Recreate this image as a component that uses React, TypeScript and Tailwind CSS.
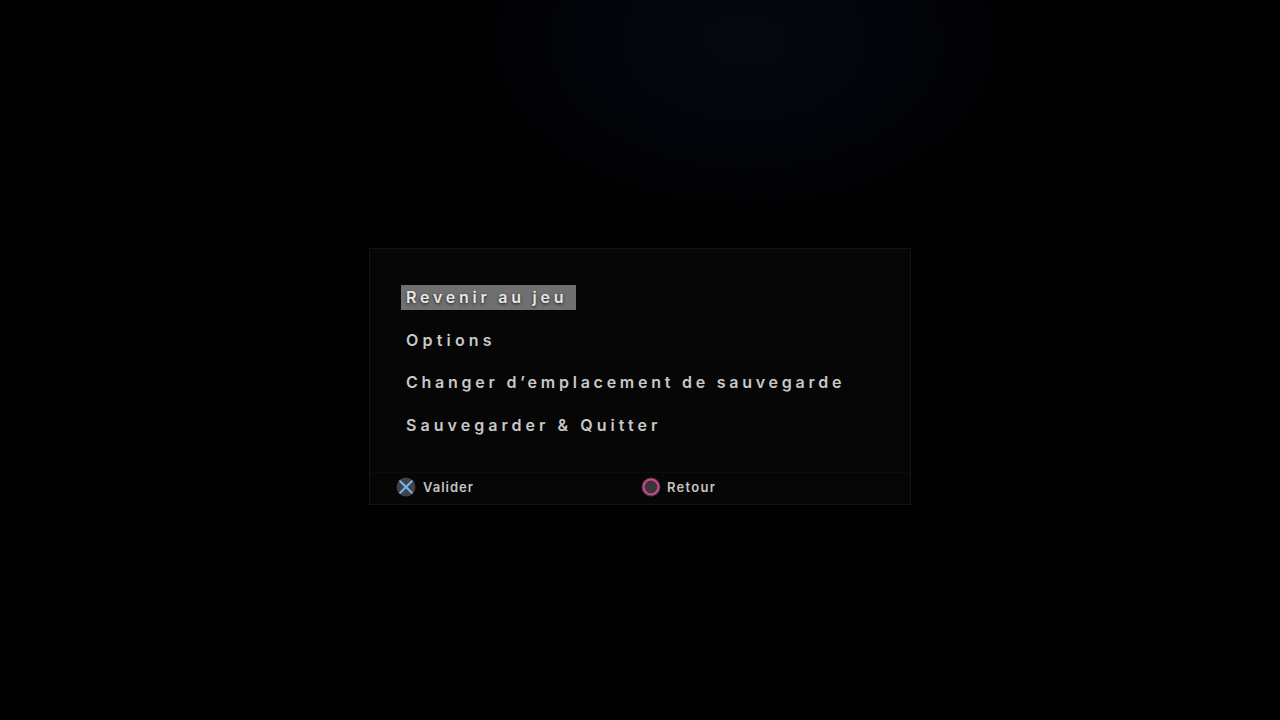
const items = [
  { label: "Options", tracking: "tracking-[4.2px]" },
  { label: "Changer d’emplacement de sauvegarde", tracking: "tracking-[3.75px]" },
  { label: "Sauvegarder & Quitter", tracking: "tracking-[4.05px]" },
];

function CrossIcon() {
  return (
    <svg width="20" height="20" viewBox="0 0 20 20" className="blur-[0.5px]">
      <circle cx="10" cy="10" r="9.5" fill="#3f4349" />
      <path d="M4.2 4.2L15.8 15.8M15.8 4.2L4.2 15.8" stroke="#78b4ec" strokeWidth="2" strokeLinecap="round" />
    </svg>
  );
}

function CircleIcon() {
  return (
    <svg width="20" height="20" viewBox="0 0 20 20" className="blur-[0.5px]">
      <circle cx="10" cy="10" r="9.5" fill="#3b3a3d" />
      <circle cx="10" cy="10" r="7.4" fill="#38383b" stroke="#d8408e" strokeWidth="2" />
    </svg>
  );
}

export default function App() {
  return (
    <div className="h-screen w-full overflow-hidden bg-black bg-[radial-gradient(ellipse_290px_190px_at_745px_40px,#05080f_0%,#030409_60%,#000000_100%)] flex justify-center pt-[248px] font-['Inter','Noto_Sans',sans-serif]">
      <div className="w-[542px] h-[257px] flex flex-col border border-[#131313] bg-[#060606]">
        {/* Menu */}
        <div className="flex-1 pt-[36px] pl-[31px] flex flex-col items-start">
          <div className="h-[25px] w-[175px] pl-[5px] pb-[1px] flex items-center bg-[#707070] text-[16px] font-semibold tracking-[3.75px] text-[#e6e6e6] whitespace-nowrap [text-shadow:0_1px_3px_#1c1c1c]">
            Revenir au jeu
          </div>
          <div className="flex flex-col gap-[17.7px] mt-[17.7px]">
            {items.map((item) => (
              <div key={item.label} className={`${item.tracking} h-[25px] pl-[5px] pb-[1px] flex items-center text-[16px] font-semibold text-[#c8c8c8] whitespace-nowrap`}>
                {item.label}
              </div>
            ))}
          </div>
        </div>

        {/* Footer */}
        <div className="h-[32px] pb-[3px] border-t border-[#0c0c0c] flex items-center pl-[26px]">
          <div className="w-[244.5px] flex items-center gap-[7px]">
            <CrossIcon />
            <span className="text-[13px] font-semibold tracking-[1px] text-[#c4c4c4] pt-[1px]">Valider</span>
          </div>
          <div className="flex items-center gap-[6.5px]">
            <CircleIcon />
            <span className="text-[13px] font-semibold tracking-[1.3px] text-[#c4c4c4] pt-[1px]">Retour</span>
          </div>
        </div>
      </div>
    </div>
  );
}
